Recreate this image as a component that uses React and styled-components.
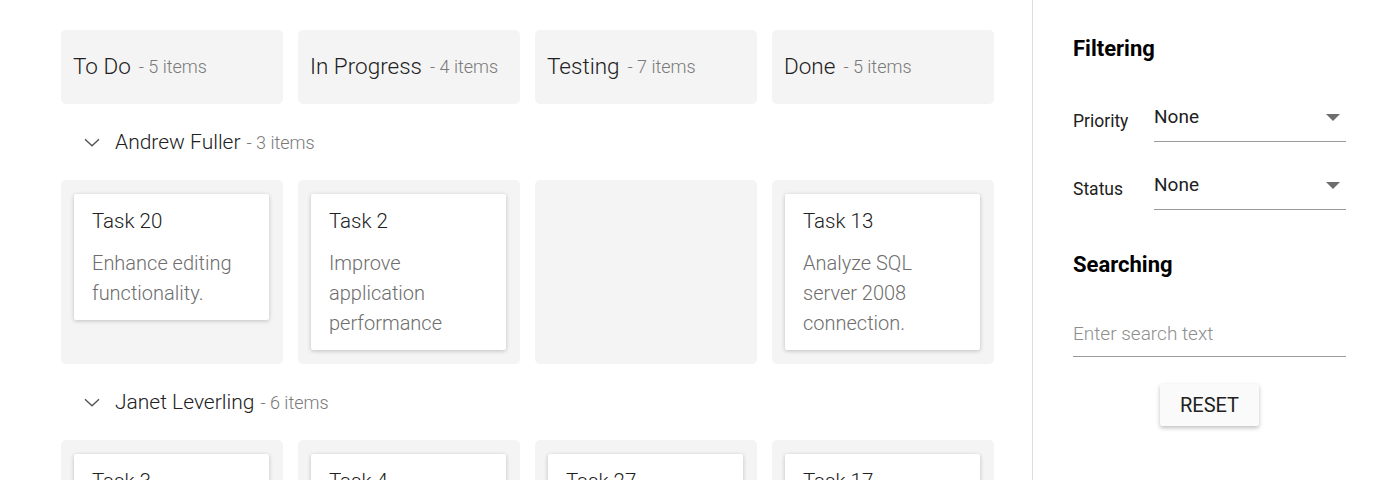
import React from "react";
import styled, { createGlobalStyle } from "styled-components";

const Global = createGlobalStyle`
  html, body { margin: 0; padding: 0; background: #fff; }
  body { font-family: Roboto, "Liberation Sans", Arial, sans-serif; color: #212121; }
  * { box-sizing: border-box; }
`;

const Page = styled.div`
  display: flex;
  height: 480px;
  overflow: hidden;
`;

const Board = styled.div`
  width: 1032px;
  flex: none;
  padding: 30px 38px 0 61px;
`;

const Grid = styled.div`
  display: grid;
  grid-template-columns: repeat(4, 222px);
  column-gap: 15px;
`;

const ColumnHeader = styled.div`
  height: 74px;
  background: #f4f4f4;
  border-radius: 5px;
  padding: 0 12px 2px;
  display: flex;
  align-items: center;
`;

const HeaderTitle = styled.span`
  font-size: 22.5px;
  font-weight: 300;
  color: #212121;
`;

const Count = styled.span`
  font-size: 18px;
  font-weight: 300;
  color: #7a7a7a;
  margin-left: ${(p) => p.$gap || 8}px;
`;

const LaneHeader = styled.div`
  height: 76px;
  display: flex;
  align-items: center;
  padding-left: 23px;
`;

const LaneName = styled.span`
  font-size: 21px;
  font-weight: 300;
  color: #212121;
  margin-left: 15px;
`;

const Cell = styled.div`
  background: #f4f4f4;
  border-radius: 5px;
  padding: 14px 14px 14px 13px;
  min-height: 184px;
  display: flex;
  flex-direction: column;
  align-items: stretch;
`;

const Card = styled.div`
  background: #fff;
  border-radius: 2px;
  box-shadow: 0 1px 4px rgba(0, 0, 0, 0.22);
  padding: 15px 18px 12px;
`;

const CardTitle = styled.div`
  font-size: 20.5px;
  font-weight: 300;
  line-height: 24px;
  color: #212121;
`;

const CardText = styled.div`
  margin-top: 15px;
  font-size: 20px;
  font-weight: 300;
  line-height: 30px;
  color: #6e6e6e;
`;

const Sidebar = styled.aside`
  flex: 1;
  border-left: 1px solid #dcdcdc;
  padding: 36px 44px 0 40px;
`;

const SectionTitle = styled.div`
  font-size: 22px;
  line-height: 25px;
  font-weight: 700;
  color: #000;
  margin-top: ${(p) => p.$top || 0}px;
`;

const FilterRow = styled.div`
  display: flex;
  align-items: flex-end;
  margin-top: ${(p) => p.$top}px;
`;

const FilterLabel = styled.div`
  width: 81px;
  font-size: 17.5px;
  line-height: 20px;
  color: #212121;
  margin-bottom: 11px;
`;

const Select = styled.div`
  flex: 1;
  display: flex;
  align-items: center;
  justify-content: space-between;
  padding: 0 6px 14px 0;
  border-bottom: 1px solid #9a9a9a;
  font-size: 19px;
  line-height: 20px;
  color: #212121;
`;

const Caret = styled.span`
  width: 0;
  height: 0;
  border-left: 7px solid transparent;
  border-right: 7px solid transparent;
  border-top: 7px solid #6e6e6e;
`;

const SearchInput = styled.input`
  display: block;
  width: 100%;
  margin-top: 45px;
  border: none;
  border-bottom: 1px solid #9a9a9a;
  outline: none;
  padding: 0 0 11px;
  font-family: inherit;
  font-size: 19px;
  font-weight: 300;
  line-height: 22px;
  height: 35px;
  color: #212121;
  &::placeholder { color: #8e8e8e; }
`;

const ButtonWrap = styled.div`
  display: flex;
  justify-content: center;
  margin-top: 27px;
`;

const ResetButton = styled.button`
  height: 42px;
  padding: 0 20px;
  border: none;
  border-radius: 2px;
  background: #fafafa;
  box-shadow: 0 2px 4px rgba(0, 0, 0, 0.25);
  font-family: inherit;
  font-size: 20px;
  color: #212121;
`;

const Chevron = () => (
  <svg width="16" height="9" viewBox="0 0 16 9" fill="none">
    <path d="M1 1.2 L8 7.8 L15 1.2" stroke="#555" strokeWidth="1.4" />
  </svg>
);

const columns = [
  { title: "To Do", count: 5 },
  { title: "In Progress", count: 4 },
  { title: "Testing", count: 7 },
  { title: "Done", count: 5 },
];

const lanes = [
  {
    name: "Andrew Fuller",
    count: 3,
    cells: [
      { id: "Task 20", text: "Enhance editing functionality." },
      { id: "Task 2", text: "Improve application performance" },
      null,
      { id: "Task 13", text: "Analyze SQL server 2008 connection." },
    ],
  },
  {
    name: "Janet Leverling",
    count: 6,
    cells: [
      { id: "Task 3", text: "Arrange web meeting with customer to get new requirements." },
      { id: "Task 4", text: "Fix the issues reported in the IE browser." },
      { id: "Task 27", text: "Fix the issues reported in Safari browser." },
      { id: "Task 17", text: "Fix cannot open user's default database SQL error." },
    ],
  },
];

export default function App() {
  return (
    <>
      <Global />
      <Page>
        <Board>
          <Grid>
            {columns.map((c) => (
              <ColumnHeader key={c.title}>
                <HeaderTitle>{c.title}</HeaderTitle>
                <Count>- {c.count} items</Count>
              </ColumnHeader>
            ))}
          </Grid>
          {lanes.map((lane) => (
            <React.Fragment key={lane.name}>
              <LaneHeader>
                <Chevron />
                <LaneName>{lane.name}</LaneName>
                <Count $gap={6}>- {lane.count} items</Count>
              </LaneHeader>
              <Grid>
                {lane.cells.map((card, i) => (
                  <Cell key={i}>
                    {card && (
                      <Card>
                        <CardTitle>{card.id}</CardTitle>
                        <CardText>{card.text}</CardText>
                      </Card>
                    )}
                  </Cell>
                ))}
              </Grid>
            </React.Fragment>
          ))}
        </Board>
        <Sidebar>
          <SectionTitle>Filtering</SectionTitle>
          <FilterRow $top={46}>
            <FilterLabel>Priority</FilterLabel>
            <Select>
              <span>None</span>
              <Caret />
            </Select>
          </FilterRow>
          <FilterRow $top={33}>
            <FilterLabel>Status</FilterLabel>
            <Select>
              <span>None</span>
              <Caret />
            </Select>
          </FilterRow>
          <SectionTitle $top={42}>Searching</SectionTitle>
          <SearchInput placeholder="Enter search text" />
          <ButtonWrap>
            <ResetButton>RESET</ResetButton>
          </ButtonWrap>
        </Sidebar>
      </Page>
    </>
  );
}
